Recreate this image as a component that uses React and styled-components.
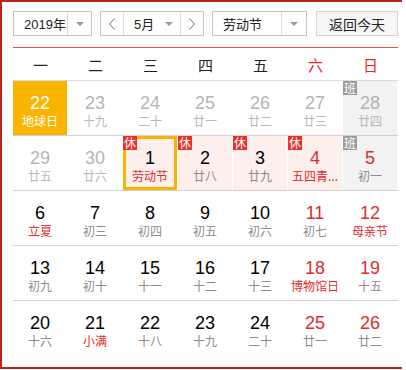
import React from 'react';
import styled, { createGlobalStyle } from 'styled-components';

const GlobalStyle = createGlobalStyle`
  body {
    margin: 0;
    background: #fff;
    font-family: "Liberation Sans", Arial, "Noto Sans CJK SC", sans-serif;
  }
`;

const RED = '#e12b2b';
const YELLOW = '#f9b400';

const Frame = styled.div`
  box-sizing: border-box;
  width: 402px;
  height: 369px;
  border: 2px solid #b8241c;
  border-right: none;
  padding: 9px 4px 0 11px;
  background: #fff;
`;

const Toolbar = styled.div`
  display: flex;
  align-items: center;
  height: 25px;
  margin-bottom: 11px;
`;

const Select = styled.div`
  box-sizing: border-box;
  display: flex;
  align-items: stretch;
  width: ${p => p.$w}px;
  height: 25px;
  margin-right: ${p => p.$gap || 0}px;
  border: 1px solid #c6c6c6;
  background: #fff;
`;

const SelectLabel = styled.div`
  flex: 1;
  display: flex;
  align-items: center;
  padding-left: 10px;
  font-size: 13px;
  color: #222;
  white-space: nowrap;
`;

const ArrowBox = styled.div`
  width: ${p => p.$w || 23}px;
  display: flex;
  align-items: center;
  justify-content: center;
  border-left: ${p => (p.$plain ? 'none' : '1px solid #dcdcdc')};
`;

const Caret = styled.span`
  width: 0;
  height: 0;
  border-left: 4px solid transparent;
  border-right: 4px solid transparent;
  border-top: 4px solid #9a9a9a;
`;

const NavBtn = styled.div`
  width: 22px;
  display: flex;
  align-items: center;
  justify-content: center;
  border-left: ${p => (p.$side === 'right' ? '1px solid #dcdcdc' : 'none')};
  border-right: ${p => (p.$side === 'left' ? '1px solid #dcdcdc' : 'none')};
`;

const TodayBtn = styled.div`
  box-sizing: border-box;
  width: 82px;
  height: 25px;
  display: flex;
  align-items: center;
  justify-content: center;
  border: 1px solid #d4d4d4;
  background: #f6f6f6;
  font-size: 14px;
  color: #222;
`;

const RedLine = styled.div`
  width: 385px;
  border-top: 1px solid #e8553d;
`;

const WeekHead = styled.div`
  display: grid;
  grid-template-columns: repeat(7, 55px);
  height: 32px;
  border-bottom: 1px solid #dcdcdc;
`;

const WeekName = styled.div`
  display: flex;
  align-items: center;
  justify-content: center;
  font-size: 15px;
  color: ${p => (p.$red ? RED : '#222')};
`;

const Row = styled.div`
  display: grid;
  grid-template-columns: repeat(7, 55px);
  height: 55px;
  box-sizing: border-box;
  border-bottom: ${p => (p.$last ? 'none' : '1px solid #d2d2d2')};
`;

const bgFor = kind =>
  ({ today: YELLOW, rest: '#fdefec', work: '#f2f2f2' }[kind] || 'transparent');

const Cell = styled.div`
  position: relative;
  box-sizing: border-box;
  border-right: 1px solid #fff;
  background: ${p => bgFor(p.$kind)};
  background-clip: padding-box;
  box-shadow: ${p => (p.$selected ? `inset 0 0 0 3px ${YELLOW}` : 'none')};
  display: flex;
  flex-direction: column;
  align-items: center;
  padding-top: 12px;
`;

const Num = styled.div`
  font-size: 18px;
  line-height: 20px;
  color: ${p => p.$color};
`;

const Lunar = styled.div`
  font-size: 12px;
  line-height: 16px;
  white-space: nowrap;
  color: ${p => p.$color};
  font-family: "Noto Sans CJK SC", sans-serif;
`;

const Badge = styled.span`
  position: absolute;
  left: 0;
  top: 0;
  width: 14px;
  height: 14px;
  display: flex;
  align-items: center;
  justify-content: center;
  font-size: 12px;
  line-height: 14px;
  color: #fff;
  background: ${p => (p.$work ? '#9b9b9b' : '#e5322d')};
  font-family: "Noto Sans CJK SC", sans-serif;
`;

const Chevron = ({ dir }) => (
  <svg width="8" height="12" viewBox="0 0 8 12">
    <polyline
      points={dir === 'left' ? '6.5,0.5 1.5,6 6.5,11.5' : '1.5,0.5 6.5,6 1.5,11.5'}
      fill="none"
      stroke="#666"
      strokeWidth="1"
    />
  </svg>
);

const weekNames = ['一', '二', '三', '四', '五', '六', '日'];

// o: other month, r: red number, lr: red lunar, k: background, b: badge, s: selected
const rows = [
  [
    { d: 22, l: '地球日', k: 'today' },
    { d: 23, l: '十九', o: 1 },
    { d: 24, l: '二十', o: 1 },
    { d: 25, l: '廿一', o: 1 },
    { d: 26, l: '廿二', o: 1 },
    { d: 27, l: '廿三', o: 1 },
    { d: 28, l: '廿四', o: 1, k: 'work', b: '班' },
  ],
  [
    { d: 29, l: '廿五', o: 1 },
    { d: 30, l: '廿六', o: 1 },
    { d: 1, l: '劳动节', lr: 1, k: 'rest', b: '休', s: 1 },
    { d: 2, l: '廿八', k: 'rest', b: '休' },
    { d: 3, l: '廿九', k: 'rest', b: '休' },
    { d: 4, l: '五四青...', r: 1, lr: 1, k: 'rest', b: '休' },
    { d: 5, l: '初一', r: 1, k: 'work', b: '班' },
  ],
  [
    { d: 6, l: '立夏', lr: 1 },
    { d: 7, l: '初三' },
    { d: 8, l: '初四' },
    { d: 9, l: '初五' },
    { d: 10, l: '初六' },
    { d: 11, l: '初七', r: 1 },
    { d: 12, l: '母亲节', r: 1, lr: 1 },
  ],
  [
    { d: 13, l: '初九' },
    { d: 14, l: '初十' },
    { d: 15, l: '十一' },
    { d: 16, l: '十二' },
    { d: 17, l: '十三' },
    { d: 18, l: '博物馆日', r: 1, lr: 1 },
    { d: 19, l: '十五', r: 1 },
  ],
  [
    { d: 20, l: '十六' },
    { d: 21, l: '小满', lr: 1 },
    { d: 22, l: '十八' },
    { d: 23, l: '十九' },
    { d: 24, l: '二十' },
    { d: 25, l: '廿一', r: 1 },
    { d: 26, l: '廿二', r: 1 },
  ],
];

function numColor(c) {
  if (c.k === 'today') return '#fff';
  if (c.o) return '#b4b4b4';
  return c.r ? RED : '#000';
}

function lunarColor(c) {
  if (c.k === 'today') return '#fff';
  if (c.o) return '#b8b8b8';
  return c.lr ? RED : '#8c8c8c';
}

export default function App() {
  return (
    <>
      <GlobalStyle />
      <Frame>
        <Toolbar>
          <Select $w={79} $gap={8}>
            <SelectLabel>2019年</SelectLabel>
            <ArrowBox><Caret /></ArrowBox>
          </Select>
          <Select $w={104} $gap={8}>
            <NavBtn $side="left"><Chevron dir="left" /></NavBtn>
            <SelectLabel>5月</SelectLabel>
            <ArrowBox $plain $w={22}><Caret /></ArrowBox>
            <NavBtn $side="right"><Chevron dir="right" /></NavBtn>
          </Select>
          <Select $w={95} $gap={9}>
            <SelectLabel>劳动节</SelectLabel>
            <ArrowBox $w={24}><Caret /></ArrowBox>
          </Select>
          <TodayBtn>返回今天</TodayBtn>
        </Toolbar>
        <RedLine />
        <WeekHead>
          {weekNames.map((w, i) => (
            <WeekName key={w} $red={i > 4}>{w}</WeekName>
          ))}
        </WeekHead>
        {rows.map((row, ri) => (
          <Row key={ri} $last={ri === rows.length - 1}>
            {row.map(c => (
              <Cell key={`${ri}-${c.d}`} $kind={c.k} $selected={c.s}>
                {c.b && <Badge $work={c.b === '班'}>{c.b}</Badge>}
                <Num $color={numColor(c)}>{c.d}</Num>
                <Lunar $color={lunarColor(c)}>{c.l}</Lunar>
              </Cell>
            ))}
          </Row>
        ))}
      </Frame>
    </>
  );
}
